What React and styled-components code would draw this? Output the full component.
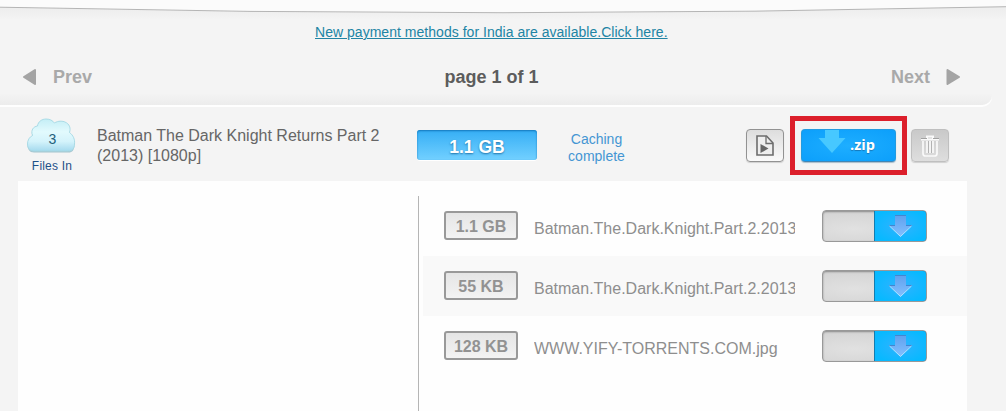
import React from 'react'
import styled, { createGlobalStyle } from 'styled-components'

const GlobalStyle = createGlobalStyle`
  * {
    box-sizing: border-box;
  }

  body {
    margin: 0;
    background-color: #f4f4f4;
    font-family: 'Liberation Sans', Arial, sans-serif;
    overflow: hidden;
  }
`

const Page = styled.div`
  width: 1006px;
  height: 411px;
  overflow: hidden;
  display: flex;
  flex-direction: column;
`

const Curve = styled.svg`
  display: block;
  flex: none;
  width: 1006px;
  height: 20px;
`

const Pager = styled.div`
  flex: none;
  width: 992px;
  height: 85px;
  border-bottom-right-radius: 10px;
  background: linear-gradient(#f4f4f4 86%, #ececec);
  box-shadow: 0 2px 0 #fefefe;
`

const Notice = styled.a`
  display: block;
  width: 360px;
  height: 24px;
  margin-left: 315px;
  color: #2184a4;
  font-size: 14px;
  line-height: 24px;
  letter-spacing: 0.03px;
  white-space: nowrap;
  text-decoration: underline;
`

const PagerBar = styled.div`
  height: 36px;
  margin-top: 15px;
  padding: 0 31px 0 22px;
  display: grid;
  grid-template-columns: 1fr 94px 1fr;
  align-items: center;
  font-size: 18px;
  font-weight: 700;
  white-space: nowrap;
`

const PageLink = styled.div`
  display: flex;
  align-items: center;
  justify-content: ${p => (p.$next ? 'flex-end' : 'flex-start')};
  gap: 16px;
  color: #a9a9a9;
`

const Current = styled.div`
  color: #5c5c5c;
`

const Torrent = styled.div`
  flex: none;
  height: 76px;
  padding-left: 25px;
  display: flex;
  align-items: flex-start;
`

const Files = styled.div`
  width: 53px;
  padding-top: 13px;
  display: flex;
  flex-direction: column;
  align-items: center;
`

const FilesLabel = styled.div`
  margin-top: 4px;
  padding-left: 1px;
  color: #1d5088;
  font-size: 12px;
  line-height: 16px;
  letter-spacing: 0.2px;
`

const Title = styled.div`
  width: 300px;
  margin: 21px 0 0 19px;
  color: #666;
  font-size: 16px;
  line-height: 20px;
`

const Size = styled.div`
  width: 120px;
  height: 30px;
  margin: 25px 0 0 20px;
  border-radius: 3px;
  background: linear-gradient(#35aef5, #72d0ff);
  box-shadow: inset 0 1px 2px #1477ba, 0 1px 0 #fff;
  color: white;
  font-size: 17.5px;
  font-weight: 700;
  line-height: 35px;
  text-align: center;
  text-shadow: 0 1px 2px #2274a8;
`

const Status = styled.div`
  width: 80px;
  margin: 26px 0 0 19px;
  padding-left: 1px;
  color: #4496d3;
  font-size: 14px;
  line-height: 17px;
  text-align: center;
`

const Actions = styled.div`
  margin-left: 110px;
  display: flex;
`

const IconButton = styled.button`
  width: 38px;
  height: 33px;
  margin-top: 24px;
  padding: 0;
  display: flex;
  align-items: center;
  justify-content: center;
  border: 1px solid ${p => (p.$disabled ? '#bfbfbf' : '#929292')};
  border-radius: 4px;
  background: ${p =>
    p.$disabled
      ? 'linear-gradient(#c9c9c9, #dedede)'
      : 'linear-gradient(#ddd, #fafafa)'};
  box-shadow: 0 1px 1px #d0d0d0;
`

const Highlight = styled.div`
  width: 117px;
  height: 59px;
  margin: 11px 4px 0 6px;
  padding: 8px 6px;
  border: 5px solid #dc1f2b;
`

const ZipButton = styled.button`
  width: 95px;
  height: 33px;
  padding: 0;
  display: flex;
  border: 1px solid #239be0;
  border-bottom-color: #4286b4;
  border-radius: 4px;
  background: radial-gradient(ellipse, #1eaeff, #0c9ffb);
  box-shadow: 0 1px 1px #a9bdca;
  color: white;
  font-family: 'Open Sans', sans-serif;
  font-size: 14.5px;
  font-weight: 700;
  line-height: 29px;
  text-shadow: 0 1px 1px #1777b8;

  svg {
    margin: 0 4px 0 16px;
  }
`

const Panel = styled.div`
  flex: 1;
  width: 949px;
  margin-left: 18px;
  padding: 15px 0 0 400px;
  background-color: #fefefe;
`

const FileList = styled.div`
  height: 100%;
  padding-left: 4px;
  border-left: 1px solid #b5b5b5;
`

const FileRow = styled.div`
  height: 60px;
  padding-left: 21px;
  display: flex;
  align-items: center;
  background-color: ${p => (p.$shaded ? '#f9f9f9' : 'transparent')};
`

const FileSize = styled.div`
  width: 74px;
  height: 29px;
  margin-bottom: 1px;
  border: 2px solid #999;
  border-radius: 3px;
  background: linear-gradient(#e5e5e5, #f3f3f3);
  color: #929292;
  font-size: 16px;
  font-weight: 700;
  line-height: 27px;
  text-align: center;
`

const FileName = styled.div`
  width: 261px;
  margin: 5px 27px 0 16px;
  overflow: hidden;
  color: #8e8e8e;
  font-size: 16px;
  line-height: 24px;
  white-space: nowrap;
`

const Toggle = styled.div`
  width: 105px;
  height: 32px;
  margin-bottom: 1px;
  display: flex;
  border: 1px solid #999;
  border-radius: 4px;
  overflow: hidden;
  background: radial-gradient(ellipse at 30% 60%, #e1e1e1, #cfcfcf);
  box-shadow: inset 0 1px 2px #888;
`

const ToggleOn = styled.div`
  width: 53px;
  height: 32px;
  margin: -1px -1px 0 auto;
  display: flex;
  align-items: center;
  justify-content: center;
  border: 1px solid #127cb0;
  border-radius: 0 4px 4px 0;
  background: radial-gradient(ellipse, #27b4ff 20%, #08b9ff 80%);
`

const Cloud = () => (
  <svg width='52' height='36' viewBox='0 0 52 36'>
    <defs>
      <linearGradient id='cloud' x1='0' y1='0' x2='0' y2='1'>
        <stop offset='0' stopColor='#c4eef6' />
        <stop offset='0.4' stopColor='#e2fafd' />
        <stop offset='0.7' stopColor='#d4f3fb' />
        <stop offset='1' stopColor='#a5daee' />
      </linearGradient>
    </defs>
    <path
      d='M8 34.5C3.500 34.500 1.500 31 1.500 27C1.500 22.500 3.500 20 6.500 18.500C4.500 12.500 7.500 9 11.500 8.500C12 4 16 1.500 20 1.500C24 1.500 26.500 3 28.500 5.500C32 2.500 37 3.500 39 4.500C43.500 6.500 45 10.500 43.500 15C47.500 18 49 22 48.500 27C48.200 32 46.500 34.500 42.500 34.500Z'
      fill='#7daebd'
      opacity='0.65'
    />
    <path
      d='M8 33C3.500 33 1.500 30 1.500 26C1.500 22 3.500 19 6.500 17.500C4.500 12 7.500 8.500 11.500 8C12 3.500 16 1 20 1C24 1 26.500 2.500 28.500 5C32 2.500 37 3 39 4C43.500 6 45 10 43.500 14.500C47.500 17.500 49 21.500 48.500 26C48.200 31 46.500 33 42.500 33Z'
      fill='url(#cloud)'
      stroke='#a6d9e4'
      strokeWidth='0.9'
    />
    <text
      x='26.500'
      y='26'
      textAnchor='middle'
      fontSize='14'
      fill='#245f7d'
    >
      3
    </text>
  </svg>
)

const Arrow = ({ next }) => (
  <svg width='15' height='18' viewBox='0 0 15 18'>
    <path
      d={next ? 'M1.500 2L13 9L1.500 16Z' : 'M13 2L2 9L13 16Z'}
      fill='#a4a4a4'
      stroke='#a4a4a4'
      strokeWidth='2'
      strokeLinejoin='round'
    />
  </svg>
)

const PlayFile = () => (
  <svg width='18' height='21' viewBox='0 0 18 21' fill='none'>
    <path
      d='M1 1H10.500L17 8V20H1Z'
      fill='#eee'
      stroke='#6d6d6d'
      strokeWidth='1.600'
    />
    <path d='M10 1V8.500H17' stroke='#6d6d6d' strokeWidth='1.300' />
    <path d='M4.500 9L12.500 13.500L4.500 18Z' fill='#666' />
  </svg>
)

const Trash = () => (
  <svg width='20' height='22' viewBox='0 0 20 22' fill='none'>
    <path d='M1 4.500H19M7 4V1.500H13V4' stroke='#fafafa' strokeWidth='2' />
    <path d='M1 3.500H7M13 3.500H19' stroke='#a2a2a2' />
    <path
      d='M3 6V18.500Q3 21 5.500 21H14.500Q17 21 17 18.500V6M7 6V18M10 6V18M13 6V18'
      stroke='#fafafa'
      strokeWidth='1.700'
    />
    <path d='M8.500 6V18M11.500 6V18' stroke='#aaa' strokeWidth='0.800' />
  </svg>
)

const ZipArrow = () => (
  <svg width='28' height='24' viewBox='0 0 28 24'>
    <path d='M7 0H21V8H27.500L14 23L0.500 8H7Z' fill='#47c8ff' />
  </svg>
)

const DownArrow = () => (
  <svg width='25' height='24' viewBox='0 0 25 24'>
    <defs>
      <linearGradient id='down' x1='0' y1='0' x2='0' y2='1'>
        <stop offset='0' stopColor='#5fa0ee' />
        <stop offset='1' stopColor='#83c0ff' />
      </linearGradient>
    </defs>
    <path d='M7 1H18V11H24L12.500 22.500L1 11H7Z' fill='url(#down)' />
    <path d='M7 1.500H18M1 11.500H7M18 11.500H24' stroke='#4386cf' />
    <path d='M1.500 12L12.500 22.500L23.500 12' fill='none' stroke='#b5e2ff' />
  </svg>
)

const files = [
  { size: '1.1 GB', name: 'Batman.The.Dark.Knight.Part.2.2013' },
  { size: '55 KB', name: 'Batman.The.Dark.Knight.Part.2.2013' },
  { size: '128 KB', name: 'WWW.YIFY-TORRENTS.COM.jpg' }
]

const App = () => {
  return (
    <Page>
      <GlobalStyle />
      <Curve viewBox='0 0 1006 20'>
        <defs>
          <linearGradient id='shade' x1='0' y1='0' x2='0' y2='1'>
            <stop offset='0.5' stopColor='#eeeeee' />
            <stop offset='1' stopColor='#f4f4f4' />
          </linearGradient>
        </defs>
        <rect width='1006' height='20' fill='url(#shade)' />
        <path
          d='M-1 -2V7.200Q503 18.500 1007 6.700V-2Z'
          fill='#fbfbfb'
          stroke='#b5b5b5'
        />
      </Curve>
      <Pager>
        <Notice>New payment methods for India are available.Click here.</Notice>
        <PagerBar>
          <PageLink>
            <Arrow />
            Prev
          </PageLink>
          <Current>page 1 of 1</Current>
          <PageLink $next>
            Next
            <Arrow next />
          </PageLink>
        </PagerBar>
      </Pager>

      <Torrent>
        <Files>
          <Cloud />
          <FilesLabel>Files In</FilesLabel>
        </Files>
        <Title>
          Batman The Dark Knight Returns Part 2
          <br />
          (2013) [1080p]
        </Title>
        <Size>1.1 GB</Size>
        <Status>Caching complete</Status>
        <Actions>
          <IconButton>
            <PlayFile />
          </IconButton>
          <Highlight>
            <ZipButton>
              <ZipArrow />
              .zip
            </ZipButton>
          </Highlight>
          <IconButton $disabled>
            <Trash />
          </IconButton>
        </Actions>
      </Torrent>

      <Panel>
        <FileList>
          {files.map((f, index) => (
            <FileRow key={index} $shaded={index % 2 === 1}>
              <FileSize>{f.size}</FileSize>
              <FileName>{f.name}</FileName>
              <Toggle>
                <ToggleOn>
                  <DownArrow />
                </ToggleOn>
              </Toggle>
            </FileRow>
          ))}
        </FileList>
      </Panel>
    </Page>
  )
}

export default App
